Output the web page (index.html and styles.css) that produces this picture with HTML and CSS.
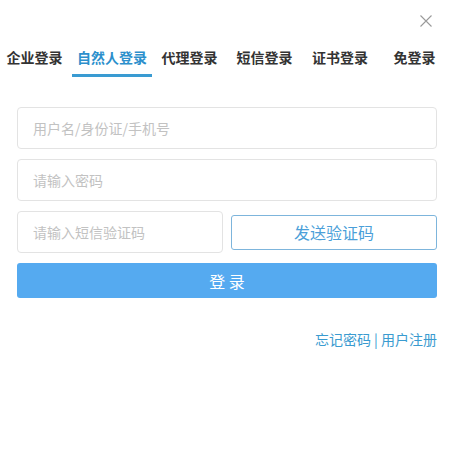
FILE: index.html
```html
<!DOCTYPE html>
<html lang="zh-CN">
<head>
<meta charset="utf-8">
<title>登录</title>
<link rel="stylesheet" href="styles.css">
</head>
<body>
<div class="dialog">
  <div class="top">
    <button class="close" aria-label="关闭">
      <svg width="12" height="12" viewBox="0 0 12 12"><path d="M0.5 0.5L11.5 11.5M11.5 0.5L0.5 11.5" stroke="#9a9a9a" stroke-width="1.1" fill="none"/></svg>
    </button>
  </div>
  <nav class="tabs">
    <span class="tab t1">企业登录</span>
    <span class="tab t2 active">自然人登录</span>
    <span class="tab t3">代理登录</span>
    <span class="tab t4">短信登录</span>
    <span class="tab t5">证书登录</span>
    <span class="tab t6">免登录</span>
  </nav>
  <form class="form">
    <input class="field" type="text" placeholder="用户名/身份证/手机号">
    <input class="field" type="password" placeholder="请输入密码">
    <div class="code-row">
      <input class="field code" type="text" placeholder="请输入短信验证码">
      <button type="button" class="send">发送验证码</button>
    </div>
    <button type="button" class="login">登 录</button>
    <div class="links"><a href="#">忘记密码</a> | <a href="#">用户注册</a></div>
  </form>
</div>
</body>
</html>
```
FILE: styles.css
```css
* { box-sizing: border-box; }
html, body { margin: 0; padding: 0; background: #fff; }
body {
  font-family: "Noto Sans CJK SC", "Noto Sans", sans-serif;
  color: #333;
  width: 454px;
  height: 459px;
  overflow: hidden;
}
.top {
  height: 40px;
  display: flex;
  justify-content: flex-end;
  align-items: flex-start;
  padding: 15px 22px 0 0;
}
.close {
  border: 0;
  background: none;
  padding: 0;
  width: 12px;
  height: 12px;
  display: block;
  cursor: pointer;
}
.close svg { display: block; }
.tabs {
  display: flex;
  margin-top: 7px;
}
.tab {
  font-size: 14px;
  font-weight: bold;
  line-height: 20px;
  padding-bottom: 7px;
  border-bottom: 3px solid transparent;
  text-align: center;
  color: #333;
  white-space: nowrap;
}
.tab.active { color: #2c8fcc; border-bottom-color: #3a9bd2; }
.t1 { width: 69px; margin-right: 3px; }
.t2 { width: 80px; }
.t3 { width: 75px; }
.t4 { width: 75px; }
.t5 { width: 76px; }
.t6 { width: 73px; }
.form {
  padding: 30px 17px 0;
  display: flex;
  flex-direction: column;
}
.field {
  display: block;
  width: 420px;
  height: 42px;
  border: 1px solid #e3e3e3;
  border-radius: 4px;
  padding: 0 15px;
  font-family: inherit;
  font-size: 14px;
  color: #333;
  outline: none;
  margin: 0 0 10px;
  background: #fff;
}
.field::placeholder { color: #c2c2c2; }
.code-row {
  display: flex;
  align-items: center;
  gap: 8px;
}
.field.code { width: 206px; margin: 0; }
.send {
  width: 206px;
  height: 35px;
  border: 1px solid #7db5dc;
  border-radius: 3px;
  background: #fff;
  color: #4b9fd9;
  font-family: inherit;
  font-size: 16px;
  padding: 0;
}
.login {
  margin-top: 10px;
  width: 420px;
  height: 35px;
  border: 0;
  border-radius: 3px;
  background: #55aaf0;
  color: #fff;
  font-family: inherit;
  font-size: 16px;
  padding: 0;
}
.links {
  margin-top: 31px;
  text-align: right;
  font-size: 14px;
  line-height: 20px;
  color: #3a9bd0;
}
.links a { color: #3a9bd0; text-decoration: none; }
```
